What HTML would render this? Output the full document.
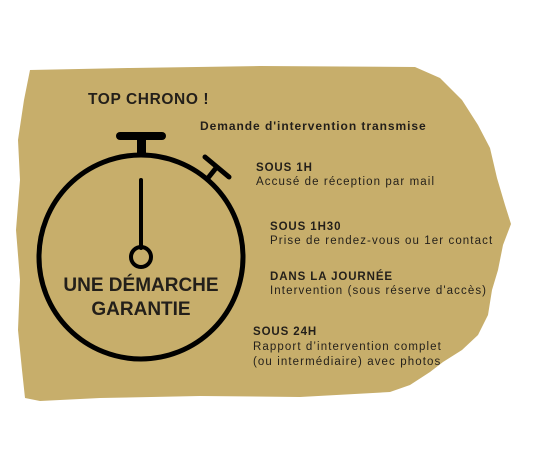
<!DOCTYPE html>
<html><head><meta charset="utf-8"><style>
html,body{margin:0;padding:0;background:#fff;width:536px;height:451px;overflow:hidden;position:relative;font-family:"Liberation Sans",sans-serif;color:#231f1a}
.t{position:absolute;white-space:nowrap;font-size:11.5px;line-height:14px;letter-spacing:1.1px}
b{font-weight:bold;letter-spacing:0.9px}
</style></head><body>
<svg width="536" height="451" style="position:absolute;left:0;top:0">
<path d="M30,70 L130,68 L260,66 L415,67 L440,78 L462,100 L478,125 L490,148 L497,178 L505,205 L511,224 L503,245 L498,270 L492,290 L488,315 L478,335 L462,350 L443,362 L430,372 L410,385 L390,392 L300,397 L200,396 L100,398 L40,401 L25,398 L22,370 L18,330 L20,280 L16,230 L20,180 L18,140 L24,100 Z" fill="#c7ae6b"/>
<circle cx="141" cy="257" r="102" fill="none" stroke="#000" stroke-width="5"/>
<line x1="120" y1="136" x2="162" y2="136" stroke="#000" stroke-width="8" stroke-linecap="round"/>
<rect x="137" y="138" width="9" height="16" fill="#000"/>
<line x1="205" y1="157" x2="229" y2="177" stroke="#000" stroke-width="5" stroke-linecap="round"/>
<line x1="216" y1="168" x2="208" y2="178" stroke="#000" stroke-width="5"/>
<line x1="141" y1="180" x2="141" y2="248" stroke="#000" stroke-width="4" stroke-linecap="round"/>
<circle cx="141" cy="257" r="10" fill="none" stroke="#000" stroke-width="4"/>
</svg>
<div class="t" style="left:88px;top:91px;font-size:15.5px;line-height:18px;font-weight:bold;letter-spacing:0.6px">TOP CHRONO !</div>
<div class="t" style="left:200px;top:119px;font-weight:bold;font-size:12px;letter-spacing:0.95px">Demande d'intervention transmise</div>
<div class="t" style="left:41px;top:274px;font-size:19px;font-weight:bold;line-height:24px;text-align:center;width:200px;letter-spacing:0">UNE DÉMARCHE<br>GARANTIE</div>
<div class="t" style="left:256px;top:161px"><b>SOUS 1H</b><br>Accusé de réception par mail</div>
<div class="t" style="left:270px;top:220px"><b>SOUS 1H30</b><br>Prise de rendez-vous ou 1er contact</div>
<div class="t" style="left:270px;top:270px"><b>DANS LA JOURNÉE</b><br>Intervention (sous réserve d'accès)</div>
<div class="t" style="left:253px;top:325px;line-height:15px"><b>SOUS 24H</b><br>Rapport d’intervention complet<br>(ou intermédiaire) avec photos</div>
</body></html>
